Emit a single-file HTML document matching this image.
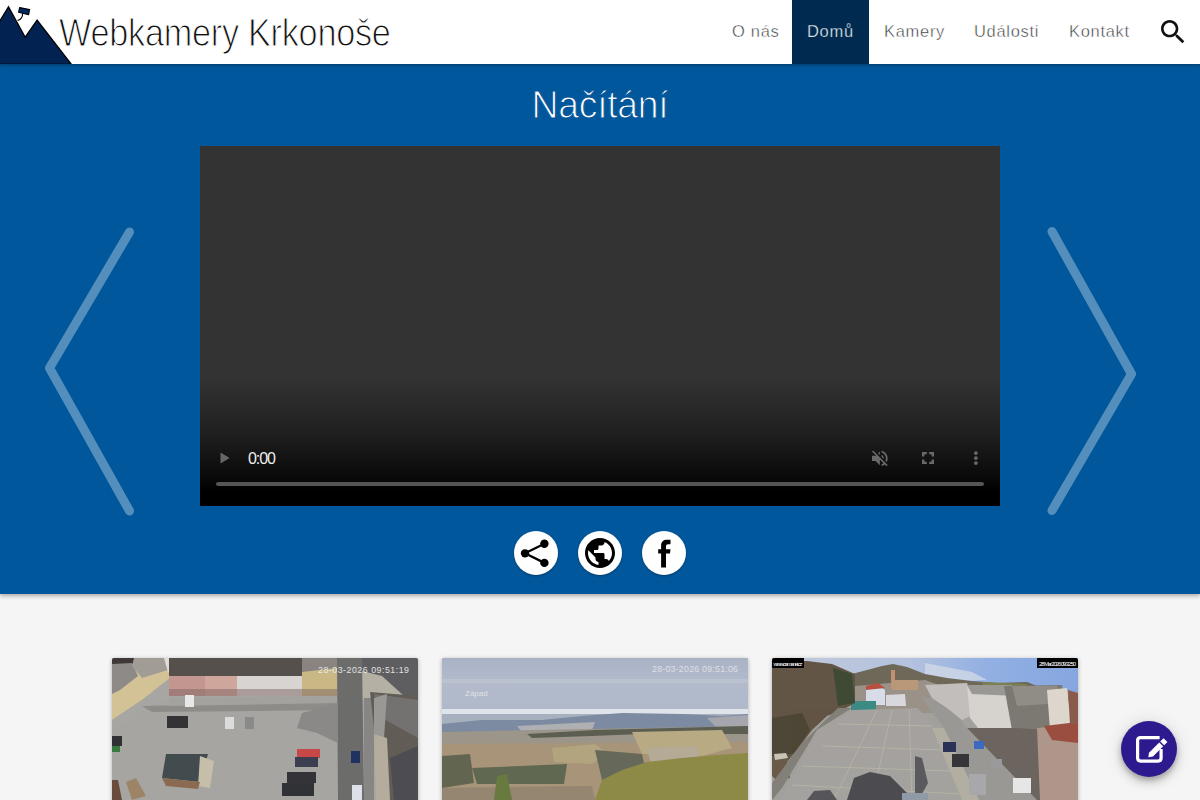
<!DOCTYPE html>
<html lang="cs">
<head>
<meta charset="utf-8">
<title>Webkamery Krkonoše</title>
<style>
*{box-sizing:border-box;margin:0;padding:0}
html,body{width:1200px;height:800px;overflow:hidden;background:#f5f5f5;font-family:"Liberation Sans",sans-serif}
.hdr{position:absolute;left:0;top:0;width:1200px;height:64px;background:#fff;z-index:5;box-shadow:0 1px 3px rgba(0,0,0,.3)}
.logo{position:absolute;left:0;top:0;width:72px;height:64px}
.title{position:absolute;left:59px;top:13px;font-size:38.5px;color:#111;white-space:nowrap;line-height:40px;-webkit-text-stroke:1.1px #fff;letter-spacing:-.3px;transform:scaleX(.89);transform-origin:0 0}
.nav{position:absolute;top:0;height:64px;line-height:63px;font-size:16.5px;color:#333;letter-spacing:.7px;white-space:nowrap;-webkit-text-stroke:.45px #fff}
.nav.act{background:#012a50;color:#dde3ea;-webkit-text-stroke:.25px #012a50}
.search{position:absolute;left:1157px;top:16px;width:32px;height:32px}
.blue{position:absolute;left:0;top:64px;width:1200px;height:530px;background:#01579b;box-shadow:0 2px 4px rgba(0,0,0,.3);z-index:2}
.h1{position:absolute;left:0;width:1200px;top:19px;text-align:center;color:#fff;font-size:38.5px;line-height:44px;-webkit-text-stroke:1.1px #01579b;letter-spacing:-.3px;transform:scaleX(.97);transform-origin:600px 0}
.chev{position:absolute;left:0;top:0;width:1200px;height:530px}
.video{position:absolute;left:200px;top:82px;width:800px;height:360px;background:linear-gradient(to bottom,#333 0,#333 232px,#1e1e1e 290px,#0a0a0a 330px,#000 345px,#000 360px);overflow:hidden}
.time{position:absolute;left:48px;top:303.5px;font-size:16px;line-height:18px;color:#eee;letter-spacing:-1.1px}
.tl{position:absolute;left:16px;top:336px;width:768px;height:4px;border-radius:2px;background:#555}
.circ{position:absolute;width:44px;height:44px;border-radius:50%;background:#fff;top:467px;box-shadow:0 1px 2px rgba(0,0,0,.3)}
.circ svg{position:absolute;left:0;top:0}
.thumb{position:absolute;top:658px;width:306px;height:160px;box-shadow:0 1px 4px rgba(0,0,0,.3);overflow:hidden;border-radius:2px 2px 0 0}
.thumb svg{display:block}
.fab{position:absolute;left:1121px;top:721px;width:56px;height:56px;border-radius:50%;background:#2e1a8f;box-shadow:0 6px 10px rgba(0,0,0,.14),0 1px 18px rgba(0,0,0,.12),0 3px 5px rgba(0,0,0,.2);z-index:6}
</style>
</head>
<body>
<div class="hdr">
  <svg class="logo" viewBox="0 0 72 64" width="72" height="64">
    <path d="M-1 22.5 L8.5 6.8 L25.2 37.2 L37.1 20.2 L71.5 64.5 L-1 64.5 Z" fill="#022252" stroke="#000" stroke-width="1.3" stroke-linejoin="miter"/>
    <path d="M22.6 13.2 C22.8 16.5 20.5 19.5 17.6 20.6" fill="none" stroke="#000" stroke-width="1.1"/>
    <path d="M19.6 7.6 L29.6 9.6 L28.6 14.6 L18.6 12.3 Z" fill="#022a66" stroke="#000" stroke-width="1.1" stroke-linejoin="round"/>
  </svg>
  <div class="title">Webkamery Krkonoše</div>
  <div class="nav" style="left:732px">O nás</div>
  <div class="nav act" style="left:792px;width:77px;padding-left:15px">Domů</div>
  <div class="nav" style="left:884px">Kamery</div>
  <div class="nav" style="left:974px">Události</div>
  <div class="nav" style="left:1069px">Kontakt</div>
  <svg class="search" viewBox="0 0 24 24" width="32" height="32"><path fill="#111" d="M15.5 14h-.79l-.28-.27C15.41 12.59 16 11.11 16 9.5 16 5.91 13.09 3 9.5 3S3 5.91 3 9.5 5.91 16 9.5 16c1.61 0 3.09-.59 4.23-1.57l.27.28v.79l5 4.99L20.49 19l-4.99-5zm-6 0C7.01 14 5 11.99 5 9.5S7.01 5 9.5 5 14 7.01 14 9.5 11.99 14 9.5 14z"/></svg>
</div>
<div class="blue">
  <div class="h1">Načítání</div>
  <svg class="chev" width="1200" height="530" viewBox="0 64 1200 530">
    <polyline points="129.5,232 49.5,368 129.5,511" fill="none" stroke="rgba(255,255,255,.33)" stroke-width="9" stroke-linecap="round" stroke-linejoin="round"/>
    <polyline points="1052,231.5 1131.5,374 1052,510.5" fill="none" stroke="rgba(255,255,255,.33)" stroke-width="9" stroke-linecap="round" stroke-linejoin="round"/>
  </svg>
  <div class="video">
    <svg style="position:absolute;left:0;top:0" width="800" height="360" viewBox="200 146 800 360">
      <path d="M220.5 452.4 L229.6 457.9 L220.5 463.4 Z" fill="#666"/>
      <g transform="translate(869.4 447.9) scale(0.87)" fill="#6a6a6a"><path d="M16.5 12c0-1.77-1.02-3.29-2.5-4.03v2.21l2.45 2.45c.03-.2.05-.41.05-.63zm2.5 0c0 .94-.2 1.82-.54 2.64l1.51 1.51C20.63 14.91 21 13.5 21 12c0-4.28-2.99-7.86-7-8.77v2.06c2.89.86 5 3.54 5 6.71zM4.27 3L3 4.27 7.73 9H3v6h4l5 5v-6.73l4.25 4.25c-.67.52-1.42.93-2.25 1.18v2.06c1.38-.31 2.63-.95 3.69-1.81L19.73 21 21 19.73l-9-9L4.27 3zM12 4L9.91 6.09 12 8.18V4z"/></g>
      <path d="M923.2 456.6 V453.1 H926.8 M929.2 453.1 H932.8 V456.6 M932.8 459.4 V462.9 H929.2 M926.8 462.9 H923.2 V459.4" fill="none" stroke="#6a6a6a" stroke-width="2.4"/>
      <circle cx="975.9" cy="453.1" r="1.9" fill="#6a6a6a"/>
      <circle cx="975.9" cy="458.1" r="1.9" fill="#6a6a6a"/>
      <circle cx="975.9" cy="463.1" r="1.9" fill="#6a6a6a"/>
    </svg>
    <div class="time">0:00</div>
    <div class="tl"></div>
  </div>
  <div class="circ" style="left:514px">
    <svg width="44" height="44" viewBox="514 531 44 44">
      <g stroke="#000" stroke-width="2.3"><line x1="525" y1="553.3" x2="544.4" y2="543.8"/><line x1="525" y1="553.3" x2="544.4" y2="562.9"/></g>
      <circle cx="525" cy="553.3" r="4.15" fill="#000"/><circle cx="544.4" cy="543.8" r="4.2" fill="#000"/><circle cx="544.4" cy="562.9" r="4.2" fill="#000"/>
    </svg>
  </div>
  <div class="circ" style="left:578px">
    <svg width="44" height="44" viewBox="578 531 44 44">
      <g transform="translate(582 535) scale(1.5)"><path fill="#000" d="M12 2C6.48 2 2 6.48 2 12s4.48 10 10 10 10-4.48 10-10S17.52 2 12 2zm-1 17.93c-3.95-.49-7-3.85-7-7.93 0-.62.08-1.21.21-1.79L9 15v1c0 1.1.9 2 2 2v1.93zm6.9-2.54c-.26-.81-1-1.39-1.9-1.39h-1v-3c0-.55-.45-1-1-1H8v-2h2c.55 0 1-.45 1-1V7h2c1.1 0 2-.9 2-2v-.41c2.93 1.19 5 4.06 5 7.41 0 2.08-.8 3.97-2.1 5.39z"/></g>
    </svg>
  </div>
  <div class="circ" style="left:642px">
    <svg width="44" height="44" viewBox="642 531 44 44">
      <g transform="translate(646 535)"><path fill="#000" d="M15.1 32.4 V18.5 H12.2 V14.2 H15.1 V10.5 C15.1 6.5 17.5 4.7 21 4.7 H24.5 V9.2 H22.2 C20.6 9.2 20 9.9 20 11.2 V14.2 H24.5 L24 18.5 H20 V32.4 Z"/></g>
    </svg>
  </div>
</div>
<div class="thumb" style="left:112px">
<svg width="306" height="142" viewBox="0 0 306 142">
  <rect width="306" height="142" fill="#a7a5a1"/>
  <!-- left top buildings -->
  <polygon points="0,0 70,0 58,20 45,30 30,42 0,62" fill="#d2c296"/>
  <rect x="0" y="0" width="22" height="6" fill="#3e3836"/>
  <polygon points="0,6 20,5 26,18 8,32 0,36" fill="#8d8a88"/>
  <polygon points="22,0 52,0 56,12 30,20 20,8" fill="#a29c96"/>
  <polygon points="52,0 70,0 68,12 56,14" fill="#e0dcd8"/>
  <polygon points="0,62 30,42 58,22 58,40 35,50 0,75" fill="#a8a6a2"/>
  <!-- central row roofs -->
  <polygon points="57,0 225,0 225,18 57,18" fill="#56504d"/>
  <rect x="57" y="18" width="36" height="20" fill="#c49690"/>
  <rect x="93" y="18" width="32" height="20" fill="#cfa69c"/>
  <rect x="125" y="18" width="65" height="20" fill="#d8d4d2"/>
  <polygon points="190,10 225,8 225,38 190,38" fill="#c9b886"/>
  <polygon points="190,0 225,0 225,10 190,14" fill="#8a8480"/>
  <rect x="57" y="31" width="168" height="7" fill="#7c6460" opacity=".5"/>
  <!-- shadow band -->
  <polygon points="30,48 225,44 225,52 40,54" fill="#8e8c89"/>
  <polygon points="58,40 225,38 225,45 58,48" fill="#a4a29e"/>
  <!-- right top buildings -->
  <polygon points="240,0 306,0 306,40 290,38 270,20 240,12" fill="#5e5e60"/>
  <polygon points="238,10 270,18 292,38 258,42 240,40" fill="#b4b0a4"/>
  <!-- dark street & shadow -->
  <polygon points="225,0 250,0 252,142 226,142" fill="#6c6c6b"/>
  <polygon points="190,55 226,45 226,85 205,75 185,70" fill="#8a8987"/>
  <rect x="252" y="40" width="10" height="102" fill="#888684"/>
  <!-- right building -->
  <polygon points="258,34 306,38 306,142 275,142 262,70" fill="#625c56"/>
  <polygon points="262,36 306,42 306,80 270,60" fill="#747270"/>
  <polygon points="262,40 275,36 272,80 262,76" fill="#9a9894"/>
  <polygon points="262,76 275,80 278,142 264,142" fill="#b4ac9c"/>
  <polygon points="278,100 306,88 306,142 282,142" fill="#4c4c52"/>
  <!-- pavilion -->
  <polygon points="54,96 96,96 88,124 50,120" fill="#424b4d"/>
  <polygon points="88,98 102,103 98,130 86,128" fill="#c6bea8"/>
  <polygon points="50,120 88,124 86,131 54,128" fill="#8a6a50"/>
  <!-- bottom-left stuff -->
  <polygon points="0,122 6,122 10,142 0,142" fill="#6a4a3a"/>
  <polygon points="14,124 24,120 34,138 20,142" fill="#9e8466"/>
  <!-- cars -->
  <rect x="55" y="58" width="21" height="12" fill="#333336"/>
  <rect x="113" y="59" width="9" height="12" fill="#dcdcdc"/>
  <rect x="133" y="59" width="9" height="12" fill="#8a8a8a"/>
  <rect x="73" y="37" width="9" height="12" fill="#e8e8e8"/>
  <rect x="185" y="91" width="23" height="9" fill="#c84848"/>
  <rect x="183" y="99" width="23" height="10" fill="#3a3e50"/>
  <rect x="175" y="114" width="29" height="11" fill="#343438"/>
  <rect x="170" y="125" width="32" height="13" fill="#303236"/>
  <rect x="239" y="93" width="9" height="12" fill="#203260"/>
  <rect x="240" y="127" width="10" height="15" fill="#dde0e8"/>
  <rect x="0" y="78" width="10" height="10" fill="#303035"/>
  <rect x="0" y="88" width="8" height="6" fill="#3a7a40"/>
  <!-- timestamp -->
  <text x="206" y="14.5" font-family="Liberation Sans" font-size="8.8" fill="#f0f0f0" opacity=".9" textLength="91">28-03-2026 09:51:19</text>
</svg>
</div>
<div class="thumb" style="left:442px">
<svg width="306" height="142" viewBox="0 0 306 142">
  <defs>
    <linearGradient id="sky2" x1="0" y1="0" x2="0" y2="1">
      <stop offset="0" stop-color="#aab2c6"/>
      <stop offset=".5" stop-color="#b2bacc"/>
      <stop offset="1" stop-color="#b0b9ca"/>
    </linearGradient>
  </defs>
  <rect width="306" height="142" fill="#a89478"/>
  <rect width="306" height="52" fill="url(#sky2)"/>
  <rect x="0" y="21" width="306" height="4" fill="#c0c6d2" opacity=".6"/>
  <rect x="0" y="51" width="306" height="5" fill="#dfe3ea"/>
  <rect x="0" y="56" width="306" height="10" fill="#a6b0be"/>
  <polygon points="0,66 40,62 100,62 140,58 180,55 240,56 280,58 306,56 306,72 0,76" fill="#7c8aa2"/>
  <polygon points="75,68 153,64 150,72 80,74" fill="#aeb0b4"/>
  <polygon points="265,60 306,57 306,68 275,70" fill="#a6a6ae"/>
  <polygon points="0,74 90,72 306,68 306,84 0,86" fill="#9c968a"/>
  <polygon points="85,76 153,72 306,68 306,76 200,76 150,78 90,80" fill="#5c5e52"/>
  <polygon points="190,74 280,72 290,90 260,98 200,96" fill="#b8aa82"/>
  <polygon points="110,90 153,86 165,95 150,106 112,104" fill="#b2a47e"/>
  <polygon points="0,98 28,96 32,125 0,130" fill="#626650"/>
  <polygon points="30,110 125,106 122,126 35,126" fill="#606852"/>
  <polygon points="153,92 200,96 205,118 160,122" fill="#66685a"/>
  <polygon points="205,90 255,88 258,108 210,110" fill="#b4aa96"/>
  <polygon points="153,142 160,122 180,112 205,104 240,100 275,97 306,95 306,142" fill="#8c8a46"/>
  <polygon points="0,130 150,128 153,142 0,142" fill="#948670"/>
  <polygon points="55,118 65,116 70,142 52,142" fill="#687a40"/>
  <text x="210" y="14" font-family="Liberation Sans" font-size="8.8" fill="#e8e8e8" opacity=".85" textLength="86">28-03-2026 09:51:06</text>
  <text x="23" y="38" font-family="Liberation Sans" font-size="8" fill="#e8e8e8" opacity=".85">Západ</text>
</svg>
</div>
<div class="thumb" style="left:772px">
<svg width="306" height="142" viewBox="0 0 306 142">
  <defs>
    <linearGradient id="sky3" x1="0" y1="0" x2="1" y2="0">
      <stop offset="0" stop-color="#c2cadc"/>
      <stop offset=".45" stop-color="#b4c2de"/>
      <stop offset=".7" stop-color="#92b0e2"/>
      <stop offset="1" stop-color="#86a6e0"/>
    </linearGradient>
  </defs>
  <rect width="306" height="142" fill="#a2a09c"/>
  <rect width="306" height="34" fill="url(#sky3)"/>
  <polygon points="153,5 200,14 215,22 175,24 153,18" fill="#d0d8e6" opacity=".8"/>
  <!-- hills -->
  <polygon points="80,16 110,8 121,6 135,9 153,16 175,20 200,23 225,25 255,24 265,28 300,40 306,42 306,50 80,50" fill="#6e6858"/>
  <polygon points="210,24 255,26 255,40 215,40" fill="#7a8050"/>
  <!-- town -->
  <polygon points="83,28 153,22 175,30 190,45 185,55 83,55" fill="#9a9288"/>
  <polygon points="94,30 106,27 113,32 113,47 94,47" fill="#d8dce8"/>
  <polygon points="94,28 106,25 113,30 94,32" fill="#b85040"/>
  <rect x="119" y="12" width="4" height="18" fill="#c09070"/>
  <polygon points="120,22 146,22 146,32 120,32" fill="#b89878"/>
  <polygon points="114,37 133,36 134,48 114,48" fill="#d8d8dc"/>
  <rect x="79" y="43" width="25" height="11" fill="#3c8a84"/>
  <!-- left trees -->
  <polygon points="0,4 35,3 60,6 83,16 83,45 70,52 55,58 40,72 25,92 10,110 0,118" fill="#625545"/>
  <polygon points="61,10 80,16 83,45 66,48" fill="#3e4a34"/>
  <polygon points="0,60 30,55 38,72 22,95 0,100" fill="#4e4636"/>
  <polygon points="0,98 14,96 18,120 4,122 0,118" fill="#6a5a48"/>
  <polygon points="2,96 14,95 16,100 3,102" fill="#c8c4b8"/>
  <!-- sidewalk -->
  <polygon points="66,50 80,50 45,72 10,130 0,142 0,125 30,85" fill="#828079"/>
  <!-- plaza -->
  <polygon points="80,52 145,50 168,70 207,142 8,142 45,72" fill="#a4a29e"/>
  <g stroke="#c4bea8" stroke-width=".8" opacity=".7">
    <line x1="105" y1="52" x2="62" y2="142"/><line x1="120" y1="52" x2="100" y2="142"/><line x1="137" y1="52" x2="140" y2="142"/>
    <line x1="30" y1="108" x2="180" y2="113"/><line x1="50" y1="88" x2="170" y2="92"/><line x1="65" y1="66" x2="160" y2="68"/><line x1="20" y1="127" x2="190" y2="136"/>
  </g>
  <!-- street -->
  <polygon points="150,40 175,40 194,70 268,142 207,142 172,70" fill="#9a9895"/>
  <polygon points="160,70 172,70 207,142 190,142" fill="#b2aea2"/>
  <!-- right buildings -->
  <polygon points="153,27 195,25 205,55 190,62 175,50 160,40" fill="#c2bebc"/>
  <polygon points="195,27 240,30 242,72 210,75 198,60" fill="#d6d2ce"/>
  <polygon points="195,27 240,27 245,38 200,36" fill="#9a9894"/>
  <polygon points="232,28 290,27 295,60 275,72 240,72" fill="#7c7872"/>
  <polygon points="240,28 285,28 290,45 245,48" fill="#908c86"/>
  <polygon points="275,32 295,30 300,72 278,72" fill="#dcd6cc"/>
  <polygon points="195,70 242,70 275,72 272,142 265,142" fill="#6c645e"/>
  <polygon points="265,70 306,66 306,142 268,142" fill="#ae968a"/>
  <polygon points="272,68 306,64 306,85 280,82" fill="#9a4e40"/>
  <polygon points="296,32 306,35 306,66 298,66" fill="#8a5a4a"/>
  <!-- shadows -->
  <polygon points="75,142 82,120 98,114 118,118 135,135 140,142" fill="#4c4c50"/>
  <polygon points="35,142 42,133 58,132 65,142" fill="#55555a"/>
  <polygon points="143,98 150,100 156,125 150,136 143,135" fill="#5a5a5e"/>
  <rect x="130" y="135" width="26" height="7" fill="#8e9aa6"/>
  <!-- cars -->
  <rect x="171" y="84" width="13" height="10" fill="#2a3258"/>
  <rect x="180" y="96" width="17" height="13" fill="#36363a"/>
  <rect x="202" y="83" width="10" height="8" fill="#3c6ac0"/>
  <rect x="219" y="101" width="11" height="9" fill="#9a9a9c"/>
  <rect x="197" y="116" width="17" height="21" fill="#a8a8ac"/>
  <rect x="241" y="120" width="18" height="15" fill="#e6e6e6"/>
  <!-- labels -->
  <rect x="0" y="0" width="32" height="10" fill="#000"/>
  <rect x="265" y="0" width="41" height="10" fill="#000"/>
  <text x="1.5" y="7.5" font-family="Liberation Sans" font-size="6" fill="#fff" textLength="29">www.camanet.cz</text>
  <text x="267" y="7.5" font-family="Liberation Sans" font-size="6" fill="#fff" textLength="37">28 Mar 2026 09:32:50</text>
</svg>
</div>
<div class="fab">
  <svg width="56" height="56" viewBox="1121 721 56 56" style="position:absolute;left:0;top:0">
    <path d="M1159.6 737.6 H1140.6 Q1137.6 737.6 1137.6 740.6 V758.1 Q1137.6 761.1 1140.6 761.1 H1158.1 Q1161.1 761.1 1161.1 758.1 V749" fill="none" stroke="#fff" stroke-width="3.2"/>
    <g transform="translate(1148.3 757.3) rotate(-45)" fill="#fff">
      <path d="M0 0 L3.8 -2.8 H18.3 V2.8 H3.8 Z"/>
      <rect x="19.7" y="-2.8" width="4.6" height="5.6"/>
    </g>
  </svg>
</div>
</body>
</html>
